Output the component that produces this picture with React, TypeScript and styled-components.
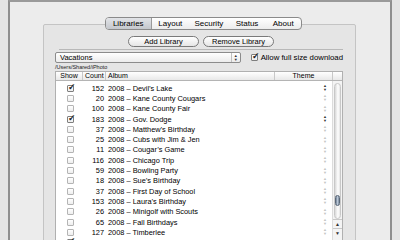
import { FC } from "react";
import styled, { createGlobalStyle } from "styled-components";

const GlobalStyle = createGlobalStyle`
  html, body {
    margin: 0;
    padding: 0;
    background: #e6e6e6;
  }
  * {
    box-sizing: border-box;
  }
`;

const SPage = styled.div`
  width: 400px;
  height: 240px;
  overflow: hidden;
  display: flex;
  background: #e4e4e4;
  font-family: "Liberation Sans", Arial, sans-serif;
  color: #000;
  -webkit-font-smoothing: antialiased;
`;

const SWindow = styled.div`
  margin-left: 8px;
  width: 384px;
  height: 260px;
  background: #ececec;
  border-left: 2px solid #8e8e8e;
  border-right: 2px solid #8e8e8e;
  border-top: 2px solid #9a9a9a;
  padding-top: 15px;
  display: flex;
  flex-direction: column;
`;

const STabsRow = styled.div`
  display: flex;
  justify-content: center;
  margin-left: 6px;
  height: 13px;
  margin-bottom: -6px;
  position: relative;
  z-index: 1;
`;

const STabs = styled.div`
  display: flex;
  width: 197px;
  border: 1px solid #8a8a8a;
  border-radius: 4px;
  overflow: hidden;
  background: linear-gradient(#ffffff, #ececec);
`;

const STab = styled.div<{ $active?: boolean; $w: number }>`
  width: ${(p) => p.$w}px;
  font-size: 8px;
  line-height: 11px;
  text-align: center;
  border-right: 1px solid ${(p) => (p.$active ? "#9a9a9a" : "transparent")};
  background: ${(p) =>
    p.$active ? "linear-gradient(#e2e4e8, #c4c7cc)" : "transparent"};
  &:last-child {
    border-right: none;
  }
`;

const SPanel = styled.div`
  margin-left: 33px;
  width: 313px;
  flex: 1;
  background: #e5e5e5;
  border: 1px solid #c4c4c4;
  border-radius: 2px;
  padding: 11px 12px 0 11px;
  display: flex;
  flex-direction: column;
`;

const SButtonRow = styled.div`
  display: flex;
  justify-content: center;
  gap: 4px;
  margin-left: 4px;
  padding-bottom: 2px;
  border-bottom: 1px solid #b8b8b8;
`;

const SButton = styled.div`
  width: 71px;
  height: 11px;
  border: 1px solid #7a7a7a;
  border-radius: 6px;
  background: linear-gradient(#ffffff, #e6e6e6);
  font-size: 7.5px;
  line-height: 9px;
  text-align: center;
`;

const SControlRow = styled.div`
  display: flex;
  align-items: center;
  margin-top: 2px;
  gap: 10px;
`;

const SPopup = styled.div`
  width: 187px;
  height: 11px;
  border: 1px solid #8c8c8c;
  border-radius: 2px;
  background: linear-gradient(#ffffff, #ececec);
  display: flex;
  align-items: center;
  justify-content: space-between;
  font-size: 7.5px;
  padding-left: 4px;
`;

const SPopupArrows = styled.div`
  width: 9px;
  height: 9px;
  border-left: 1px solid #c0c0c0;
  display: flex;
  flex-direction: column;
  align-items: center;
  justify-content: center;
  font-size: 4px;
  line-height: 4px;
  color: #333;
`;

const SCheckLabel = styled.div`
  display: flex;
  align-items: center;
  gap: 3px;
  font-size: 7.8px;
  white-space: nowrap;
`;

const SBox = styled.div<{ $checked?: boolean; $dim?: boolean }>`
  width: 7px;
  height: 7px;
  border: 1px solid ${(p) => (p.$dim ? "#b4b4b4" : "#7e7e7e")};
  background: linear-gradient(#ffffff, #eeeeee);
  position: relative;
  border-radius: 1px;
  &::after {
    content: ${(p) => (p.$checked ? '"✓"' : '""')};
    position: absolute;
    left: 0px;
    top: -4px;
    font-size: 9px;
    font-weight: bold;
    color: #222;
  }
`;

const SPath = styled.div`
  font-size: 5.5px;
  margin-top: 1px;
  line-height: 7px;
  color: #222;
`;

const STable = styled.div`
  width: 288px;
  flex: 1;
  background: #fff;
  border: 1px solid #b0b0b0;
  border-bottom: none;
  display: flex;
  flex-direction: column;
`;

const SHeader = styled.div`
  display: grid;
  grid-template-columns: 27px 23px 169px 58px 1fr;
  height: 9px;
  background: linear-gradient(#ffffff, #e8e8e8);
  border-bottom: 1px solid #b4b4b4;
  font-size: 7px;
  line-height: 8px;
`;

const SHeadCell = styled.div<{ $align?: string }>`
  border-right: 1px solid #c8c8c8;
  padding: 0 2px;
  text-align: ${(p) => p.$align || "left"};
  &:last-child {
    border-right: none;
  }
`;

const SBody = styled.div`
  display: flex;
  flex: 1;
`;

const SRows = styled.div`
  flex: 1;
  padding-top: 2px;
`;

const SRow = styled.div`
  display: grid;
  grid-template-columns: 27px 23px 169px 52px;
  height: 10.3px;
  align-items: center;
  font-size: 7.4px;
`;

const SBoxCell = styled.div`
  display: flex;
  justify-content: center;
  padding-left: 1px;
`;

const SCount = styled.div`
  text-align: right;
  padding-right: 2px;
`;

const SAlbum = styled.div`
  padding-left: 2px;
  white-space: nowrap;
`;

const SStepper = styled.div<{ $dark?: boolean }>`
  display: flex;
  flex-direction: column;
  align-items: flex-end;
  font-size: 4px;
  line-height: 4px;
  color: ${(p) => (p.$dark ? "#333" : "#c4c4c4")};
`;

const SScrollbar = styled.div`
  width: 10px;
  border-left: 1px solid #dcdcdc;
  background: #f4f4f4;
  display: flex;
  flex-direction: column;
  align-items: center;
`;

const STrack = styled.div`
  margin-top: 2px;
  width: 7px;
  height: 136px;
  border-radius: 4px;
  background: linear-gradient(90deg, #d8d8d8, #ffffff 60%, #e4e4e4);
  border: 1px solid #c8c8c8;
  display: flex;
  flex-direction: column;
  justify-content: flex-end;
  padding-bottom: 12px;
`;

const SThumb = styled.div`
  width: 5px;
  height: 11px;
  border-radius: 3px;
  background: linear-gradient(90deg, #6f7f93, #b9c6d6 50%, #7a8a9c);
  border: 1px solid #5a6878;
`;

const SArrowBtn = styled.div`
  width: 9px;
  height: 9px;
  font-size: 5px;
  line-height: 9px;
  text-align: center;
  border-top: 1px solid #c8c8c8;
  color: #333;
`;

interface Album {
  show: boolean;
  count: number;
  name: string;
}

const albums: Album[] = [
  { show: true, count: 152, name: "Devil’s Lake" },
  { show: false, count: 20, name: "Kane County Cougars" },
  { show: false, count: 100, name: "Kane County Fair" },
  { show: true, count: 183, name: "Gov. Dodge" },
  { show: false, count: 37, name: "Matthew’s Birthday" },
  { show: false, count: 25, name: "Cubs with Jim & Jen" },
  { show: false, count: 11, name: "Cougar’s Game" },
  { show: false, count: 116, name: "Chicago Trip" },
  { show: false, count: 59, name: "Bowling Party" },
  { show: false, count: 18, name: "Sue’s Birthday" },
  { show: false, count: 37, name: "First Day of School" },
  { show: false, count: 153, name: "Laura’s Birthday" },
  { show: false, count: 26, name: "Minigolf with Scouts" },
  { show: false, count: 65, name: "Fall Birthdays" },
  { show: false, count: 127, name: "Timberlee" },
];

const tabs: [string, number][] = [
  ["Libraries", 47],
  ["Layout", 38],
  ["Security", 40],
  ["Status", 37],
  ["About", 35],
];

const App: FC = () => {
  return (
    <SPage>
      <GlobalStyle />
      <SWindow>
        <STabsRow>
          <STabs>
            {tabs.map(([t, w], i) => (
              <STab key={t} $w={w} $active={i === 0}>
                {t}
              </STab>
            ))}
          </STabs>
        </STabsRow>
        <SPanel>
          <SButtonRow>
            <SButton>Add Library</SButton>
            <SButton>Remove Library</SButton>
          </SButtonRow>
          <SControlRow>
            <SPopup>
              Vacations
              <SPopupArrows>
                <span>▲</span>
                <span>▼</span>
              </SPopupArrows>
            </SPopup>
            <SCheckLabel>
              <SBox $checked />
              Allow full size download
            </SCheckLabel>
          </SControlRow>
          <SPath>/Users/Shared/iPhoto</SPath>
          <STable>
            <SHeader>
              <SHeadCell $align="center">Show</SHeadCell>
              <SHeadCell $align="center">Count</SHeadCell>
              <SHeadCell>Album</SHeadCell>
              <SHeadCell $align="center">Theme</SHeadCell>
              <SHeadCell />
            </SHeader>
            <SBody>
              <SRows>
                {albums.map((a, i) => (
                  <SRow key={i}>
                    <SBoxCell>
                      <SBox $checked={a.show} $dim={!a.show} />
                    </SBoxCell>
                    <SCount>{a.count}</SCount>
                    <SAlbum>2008 – {a.name}</SAlbum>
                    <SStepper $dark={a.show}>
                      <span>▲</span>
                      <span>▼</span>
                    </SStepper>
                  </SRow>
                ))}
                <SRow>
                  <SBoxCell>
                    <SBox $checked />
                  </SBoxCell>
                </SRow>
              </SRows>
              <SScrollbar>
                <STrack>
                  <SThumb />
                </STrack>
                <SArrowBtn>▲</SArrowBtn>
                <SArrowBtn>▼</SArrowBtn>
              </SScrollbar>
            </SBody>
          </STable>
        </SPanel>
      </SWindow>
    </SPage>
  );
};

export default App;
